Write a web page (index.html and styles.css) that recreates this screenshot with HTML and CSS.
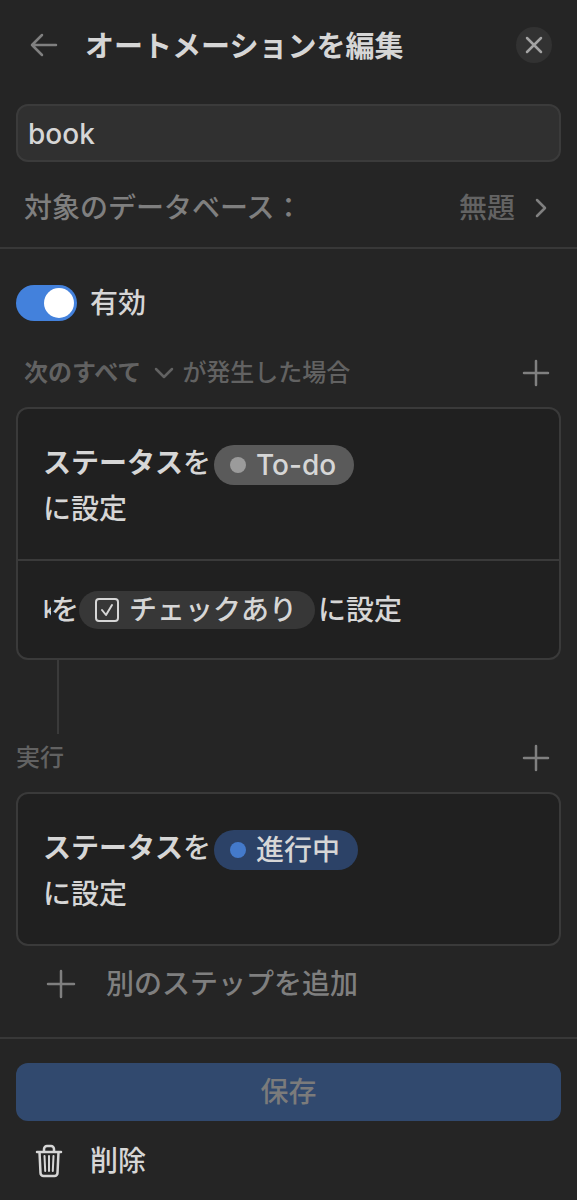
FILE: index.html
```html
<!DOCTYPE html>
<html lang="ja">
<head>
<meta charset="utf-8">
<meta name="viewport" content="width=device-width, initial-scale=1">
<title>オートメーションを編集</title>
<link rel="stylesheet" href="styles.css">
</head>
<body>
<main class="panel">
  <header class="header">
    <button class="icon-button" type="button" aria-label="戻る">
      <svg class="icon muted" viewBox="0 0 32 32"><path d="M29 16H5M15 6L5 16l10 10"/></svg>
    </button>
    <h1 class="title">オートメーションを編集</h1>
    <button class="icon-button close" type="button" aria-label="閉じる">
      <svg class="icon" viewBox="0 0 32 32"><path d="M9 9l14 14M23 9L9 23"/></svg>
    </button>
  </header>

  <section class="settings">
    <input class="name" type="text" value="book" aria-label="オートメーション名">
    <button class="database" type="button">
      <span>対象のデータベース：</span>
      <span class="database-name">無題
        <svg class="chevron-right" viewBox="0 0 16 24"><path d="M4 4l8 8-8 8"/></svg>
      </span>
    </button>
  </section>

  <section class="flow">
    <label class="enabled">
      <input class="switch" type="checkbox" role="switch" checked>
      <span>有効</span>
    </label>

    <div class="section-head trigger-head">
      <button class="match" type="button">次のすべて
        <svg class="chevron-down" viewBox="0 0 20 16"><path d="M2 4l8 8 8-8"/></svg>
      </button>
      <span class="grow">が発生した場合</span>
      <button class="icon-button" type="button" aria-label="トリガーを追加">
        <svg class="icon muted" viewBox="0 0 32 32"><path d="M16 4v24M4 16h24"/></svg>
      </button>
    </div>
    <div class="card">
      <div class="step">
        <div class="line"><strong>ステータス</strong>を<span class="chip status gray"><i class="dot"></i>To-do</span></div>
        <div class="line">に設定</div>
      </div>
      <div class="step single">
        <div class="line"><span class="clipped">k</span>を<span class="chip check"><svg class="checkbox" viewBox="0 0 24 24"><rect x="1" y="1" width="22" height="22" rx="3"/><path d="M7 12l4 5 6-10"/></svg>チェックあり</span>に設定</div>
      </div>
    </div>
    <div class="connector"></div>

    <div class="section-head action-head">
      <span class="grow">実行</span>
      <button class="icon-button" type="button" aria-label="アクションを追加">
        <svg class="icon muted" viewBox="0 0 32 32"><path d="M16 4v24M4 16h24"/></svg>
      </button>
    </div>
    <div class="card">
      <div class="step">
        <div class="line"><strong>ステータス</strong>を<span class="chip status blue"><i class="dot"></i>進行中</span></div>
        <div class="line">に設定</div>
      </div>
    </div>
    <button class="add-step" type="button">
      <svg class="icon" viewBox="0 0 32 32"><path d="M16 3v26M3 16h26"/></svg>
      別のステップを追加
    </button>
  </section>

  <footer class="footer">
    <button class="save" type="button" disabled>保存</button>
    <button class="delete" type="button">
      <svg class="trash" viewBox="0 0 32 36"><path d="M4 9h24M11 9V6a3 3 0 0 1 3-3h4a3 3 0 0 1 3 3v3M6.500 9l1 21a3 3 0 0 0 3 3h11a3 3 0 0 0 3-3l1-21"/><path class="thin" d="M11.500 13l.7 15M16 13v15M20.500 13l-.7 15"/></svg>
      削除
    </button>
  </footer>
</main>
</body>
</html>
```
FILE: styles.css
```css
* {
  box-sizing: border-box;
}

body {
  margin: 0;
  background: #252525;
  color: #d6d6d6;
  font: 500 28px/40px Inter, "Noto Sans CJK JP", sans-serif;
}

button,
input {
  margin: 0;
  padding: 0;
  border: 0;
  background: none;
  color: inherit;
  font: inherit;
}

button {
  cursor: pointer;
}

svg {
  flex: none;
  fill: none;
  stroke: currentColor;
  stroke-width: 2.5;
  stroke-linecap: round;
  stroke-linejoin: round;
}

.panel {
  min-height: 100vh;
}

.header {
  display: flex;
  align-items: center;
  height: 90px;
  padding: 0 25px;
}

.icon-button {
  display: flex;
  flex: none;
  align-items: center;
  justify-content: center;
  width: 36px;
  height: 36px;
}

.icon {
  width: 32px;
  height: 32px;
}

.muted {
  color: #808080;
}

.title {
  flex: 1;
  margin: 0;
  padding: 4px 0 0 24px;
  font-size: 29px;
  font-weight: 700;
}

.close {
  border-radius: 50%;
  background: #323232;
  color: #a3a3a3;
}

.settings {
  padding: 14px 16px 19px;
  border-bottom: 2px solid #383838;
}

.name {
  display: block;
  width: 100%;
  height: 58px;
  padding: 2px 10px 0;
  border: 2px solid #3b3b3b;
  border-radius: 12px;
  background: #303030;
}

.database {
  display: flex;
  align-items: center;
  justify-content: space-between;
  width: 100%;
  margin-top: 26px;
  padding: 0 12px 0 8px;
  color: #7f7f7f;
}

.database-name {
  display: flex;
  align-items: center;
  gap: 18px;
  color: #636363;
}

.chevron-right {
  width: 16px;
  height: 24px;
  color: #808080;
}

.flow {
  padding: 34px 16px 33px;
}

.enabled {
  display: flex;
  align-items: center;
  gap: 13px;
}

.switch {
  display: flex;
  align-items: center;
  justify-content: flex-end;
  width: 61px;
  height: 36px;
  padding: 3px;
  border-radius: 18px;
  background: #4381dc;
  appearance: none;
}

.switch::before {
  width: 30px;
  height: 30px;
  border-radius: 50%;
  background: #fff;
  content: "";
}

.switch:not(:checked) {
  justify-content: flex-start;
  background: #555;
}

.section-head {
  display: flex;
  align-items: center;
  padding-right: 7px;
  color: #626262;
  font-size: 24px;
}

.trigger-head {
  margin: 30px 0 14px;
  padding-left: 8px;
}

.match {
  display: flex;
  align-items: center;
  gap: 13px;
  margin-right: 8px;
  font-weight: 700;
}

.chevron-down {
  width: 20px;
  height: 16px;
}

.grow {
  flex: 1;
}

.card {
  border: 2px solid #3a3a3a;
  border-radius: 12px;
  background: #202020;
}

.step {
  padding: 31px 25px 27px;
}

.step + .step {
  border-top: 2px solid #3a3a3a;
}

.single {
  padding: 26px 25px 25px;
}

.line {
  display: flex;
  align-items: center;
  height: 46px;
}

.clipped {
  width: 8px;
  overflow: hidden;
  font-size: 24px;
}

.chip {
  display: flex;
  align-items: center;
  height: 38px;
  padding: 0 18px 0 16px;
  border-radius: 20px;
}

.status {
  height: 40px;
  margin: 3px 0 0 3px;
}

.dot {
  width: 16px;
  height: 16px;
  margin-right: 10px;
  border-radius: 50%;
}

.gray {
  background: #5a5a5a;
}

.gray .dot {
  background: #9b9b9b;
}

.blue {
  background: #2c4267;
}

.blue .dot {
  background: #447acb;
}

.check {
  margin-right: 3px;
  background: #373737;
}

.checkbox {
  width: 24px;
  height: 24px;
  margin-right: 10px;
  stroke-width: 2;
}

.connector {
  width: 2px;
  height: 74px;
  margin-left: 41px;
  background: #3a3a3a;
}

.action-head {
  margin: 4px 0 14px;
}

.add-step {
  display: flex;
  align-items: center;
  gap: 29px;
  margin-top: 18px;
  padding-left: 29px;
  color: #7f7f7f;
}

.footer {
  padding: 24px 16px 16px;
  border-top: 2px solid #383838;
}

.save {
  display: block;
  width: 100%;
  height: 58px;
  border-radius: 12px;
  background: #31496e;
  color: #7b7b7b;
}

.delete {
  display: flex;
  align-items: center;
  gap: 25px;
  margin-top: 20px;
  padding-left: 17px;
}

.trash {
  width: 32px;
  height: 36px;
}

.thin {
  stroke-width: 2;
}
```
